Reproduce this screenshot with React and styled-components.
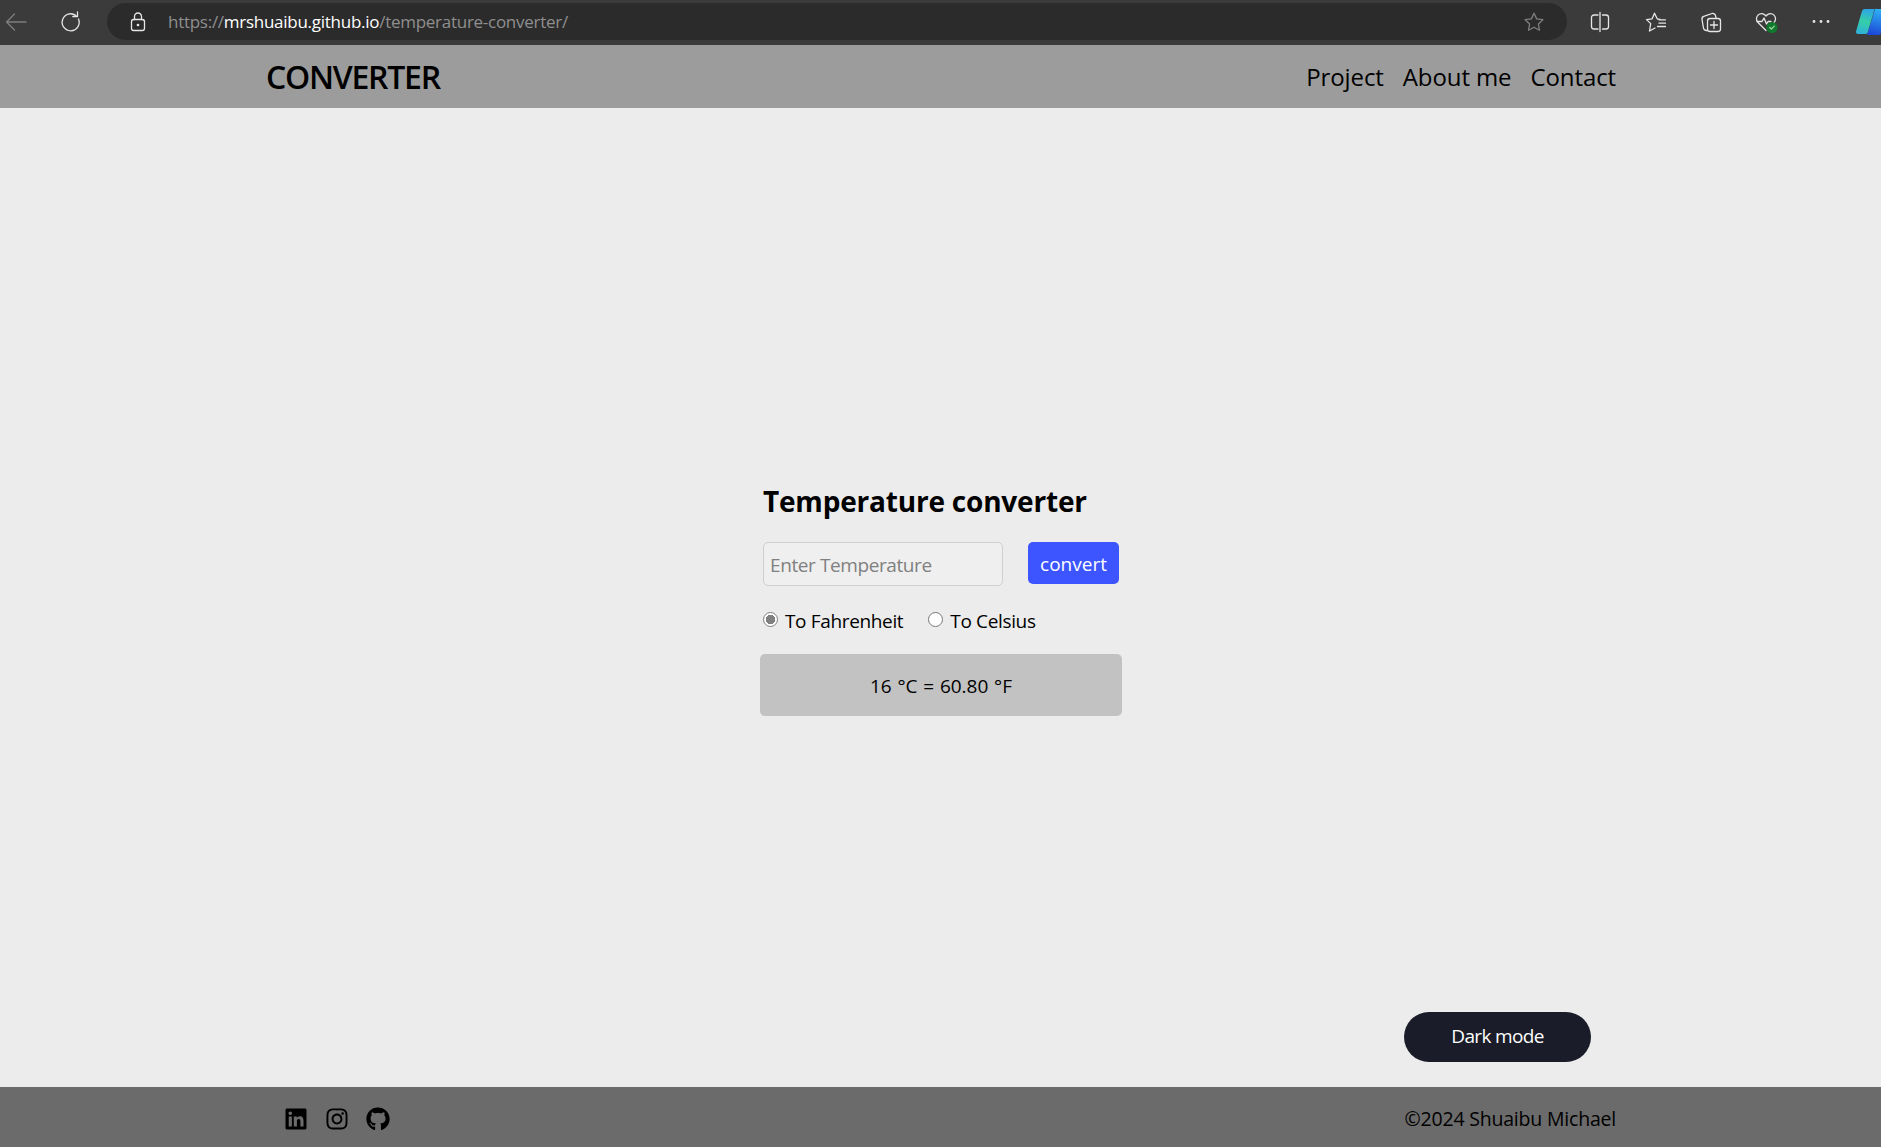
import React from "react";
import styled, { createGlobalStyle } from "styled-components";
import { FaLinkedin, FaInstagram, FaGithub } from "react-icons/fa";

const Global = createGlobalStyle`
  html, body { margin: 0; padding: 0; height: 100%; overflow: hidden; }
  body { font-family: "Open Sans", "Noto Sans", "Liberation Sans", sans-serif; background: #ececec; color: #000; }
  * { box-sizing: border-box; }
`;
const Page = styled.div`
  width: 1881px; height: 1147px; display: flex; flex-direction: column; overflow: hidden;
`;
const BrowserBar = styled.div`
  height: 45px; flex: none; background: #3b3b3b; display: flex; align-items: center; position: relative;
  padding: 0 0 2px 4px;
`;
const NavIcon = styled.span`
  display: flex; width: 24px; height: 24px; flex: none; align-items: center; justify-content: center;
  margin-left: ${p => p.$ml || 0}px; margin-right: ${p => p.$mr || 0}px; color: ${p => p.$dim ? "#7e7e7e" : "#e6e6e6"};
`;
const UrlPill = styled.div`
  width: 1460px; height: 37px; margin-left: 24px; border-radius: 19px; background: #2b2b2b; flex: none;
  display: flex; align-items: center; padding-left: 19px;
`;
const UrlText = styled.div`
  margin-left: 18px; font-size: 17px; letter-spacing: -0.27px; color: #8f8f8f; white-space: nowrap; flex: 1;
  b { font-weight: 400; color: #fff; }
`;
const Nav = styled.header`
  height: 63px; flex: none; background: #9c9c9c; display: flex; align-items: center; justify-content: space-between;
  padding: 1px 265px 0 266px;
`;
const Brand = styled.div`
  font-size: 32px; font-weight: 600; letter-spacing: -1.25px; line-height: 1;
`;
const NavLinks = styled.nav`
  display: flex; gap: 19px;
`;
const NavLink = styled.a`
  font-size: 24px; letter-spacing: -0.1px; color: #000; line-height: 1;
`;
const Main = styled.main`
  flex: 1; display: flex; flex-direction: column; padding-top: 376px;
`;
const Converter = styled.section`
  width: 362px; margin-left: 760px; display: flex; flex-direction: column;
`;
const Title = styled.h1`
  margin: 0 0 0 3px; font-size: 28px; font-weight: 700; line-height: 34px; letter-spacing: -0.2px; white-space: nowrap;
`;
const InputRow = styled.div`
  display: flex; margin: 24px 0 0 3px; align-items: flex-start;
`;
const TempInput = styled.input`
  width: 240px; height: 44px; padding: 1px 6px 0; border: 1px solid #cfcfcf; border-radius: 5px; background: #efefef;
  font: 400 19px "Open Sans", sans-serif; letter-spacing: -0.4px; outline: none;
  &::placeholder { color: #808080; opacity: 1; }
`;
const ConvertButton = styled.button`
  width: 91px; height: 42px; margin-left: 25px; border: 0; border-radius: 5px; background: #3d55ff; color: #fff;
  font: 400 19px "Open Sans", sans-serif; padding: 2px 0 0;
`;
const RadioRow = styled.div`
  display: flex; margin: 20px 0 0 3px; height: 28px; align-items: center;
`;
const RadioLabel = styled.label`
  display: flex; align-items: center; font-size: 19px; letter-spacing: -0.35px; margin-right: 25px; white-space: nowrap;
  padding-top: 2px;
`;
const RadioDot = styled.span`
  width: 15px; height: 15px; border-radius: 50%; flex: none; margin: -4px 7px 0 0;
  background: ${p => p.$on ? "radial-gradient(circle, #808080 0 4.5px, #fff 5px)" : "#fff"};
  border: 1px solid ${p => p.$on ? "#808080" : "#767676"};
`;
const Result = styled.div`
  margin-top: 20px; height: 62px; border-radius: 5px; background: #c2c2c2; display: flex; align-items: center; justify-content: center;
  font-size: 19px; word-spacing: 0.8px; padding-top: 2px;
`;
const ModeRow = styled.div`
  margin-top: auto; padding: 0 290px 25px 0; display: flex; justify-content: flex-end;
`;
const ModeButton = styled.button`
  width: 187px; height: 50px; border: 0; border-radius: 25px; background: #1a1c29; color: #fff;
  font: 400 19px "Open Sans", sans-serif; letter-spacing: -0.65px; padding: 0 0 2px;
`;
const Footer = styled.footer`
  height: 60px; flex: none; background: #6b6b6b; display: flex; align-items: center; justify-content: space-between;
  padding: 3px 265px 0 284px;
`;
const Socials = styled.div`
  display: flex; align-items: center; gap: 17px; font-size: 24px; color: #000; svg { display: block; }
`;
const Copy = styled.div`
  font-size: 19.5px; letter-spacing: -0.2px; color: #000;
`;
const CopilotMark = styled.svg`
  flex: none; width: 36px; height: 28px; margin-left: 23px;
`;

const S = { fill: "none", stroke: "currentColor", strokeWidth: 1.3, strokeLinecap: "round", strokeLinejoin: "round" };
const Ic = ({ children }) => <svg width="24" height="24" viewBox="0 0 24 24" {...S}>{children}</svg>;

export default function App() {
  return (
    <Page>
      <Global />
      <BrowserBar>
        <NavIcon $dim><Ic><path d="M22 12H2.500M10.500 4l-8 8 8 8" /></Ic></NavIcon>
        <NavIcon $ml={31}><Ic><path d="M19.500 9a8.500 8.500 0 1 1-2.600-3.400M18.500 1.800v4.700h-4.700" /></Ic></NavIcon>
        <UrlPill>
          <NavIcon><Ic><rect x="5.500" y="9.500" width="13" height="11" rx="2.200" /><path d="M8.500 9.500V6.500a3.500 3.500 0 0 1 7 0v3" /><circle cx="12" cy="15" r=".7" fill="currentColor" /></Ic></NavIcon>
          <UrlText>https://<b>mrshuaibu.github.io</b>/temperature-converter/</UrlText>
          <NavIcon $dim $mr={21}><Ic><path d="M12 3.200l2.700 5.700 6.200.8-4.500 4.300 1.100 6.200L12 17.200l-5.500 3 1.100-6.200L3.100 9.700l6.200-.8z" /></Ic></NavIcon>
        </UrlPill>
        <NavIcon $ml={21}><Ic><path d="M10 5H6a2.500 2.500 0 0 0-2.500 2.500v9A2.500 2.500 0 0 0 6 19h4M14.500 5H18a2.500 2.500 0 0 1 2.500 2.500v9A2.500 2.500 0 0 1 18 19h-3.500M12 2.500v19" /></Ic></NavIcon>
        <NavIcon $ml={32}><Ic><path d="M16 9.500l-2.800-.7-2.700-5.600-2.400 5.600-5.600.8 4.200 4-1.200 7.400 5.500-3M15 9.800h6.500M15 13.200h6.500M13.500 16.500h8" /></Ic></NavIcon>
        <NavIcon $ml={31}><Ic><path d="M8.500 20.500H7.500a3 3 0 0 1-3-2.300L3 9.500a3 3 0 0 1 2.400-3.400L13 3.500a3 3 0 0 1 3.600 2.300l.4 2" /><rect x="8.500" y="8.500" width="13" height="13" rx="2.500" /><path d="M15 11.500v7M11.500 15h7" /></Ic></NavIcon>
        <NavIcon $ml={31}>
          <Ic><path d="M12 20.500L4 12.500a5.200 5.200 0 0 1 0-7.400 5 5 0 0 1 7.300.2l.7.800.7-.8a5 5 0 0 1 7.300-.2 5.200 5.200 0 0 1 0 7.400" /><path d="M3 11.500h5l2-3.500 2.500 6 1.500-2.500h3" /><circle cx="18" cy="17.500" r="5.500" fill="#0f7a2b" stroke="none" /><path d="M15.800 17.500l1.600 1.600 2.800-3" stroke="#a5d6a7" /></Ic>
        </NavIcon>
        <NavIcon $ml={31}><svg width="24" height="24" viewBox="0 0 24 24" fill="currentColor"><circle cx="5" cy="11.500" r="1.400" /><circle cx="12" cy="11.500" r="1.400" /><circle cx="19" cy="11.500" r="1.400" /></svg></NavIcon>
        <CopilotMark viewBox="0 0 36 28">
          <defs>
            <linearGradient id="copilotLeft" x1="0.500" y1="0" x2="0.300" y2="1">
              <stop offset="0" stopColor="#2ea3e8" />
              <stop offset="0.500" stopColor="#35cfa8" />
              <stop offset="1" stopColor="#2fb0d8" />
            </linearGradient>
            <linearGradient id="copilotRight" x1="0.600" y1="0" x2="0.400" y2="1">
              <stop offset="0" stopColor="#2fb2f5" />
              <stop offset="1" stopColor="#1c48d8" />
            </linearGradient>
          </defs>
          <path d="M19 1h9a3 3 0 0 1 3 3l-6 20a3 3 0 0 1-3 3H11z" fill="url(#copilotRight)" />
          <path d="M9 1h12a2 2 0 0 0-3 2l-6 20a3 3 0 0 1-3 3H2a2 2 0 0 1-2-2.500L6 3a3 3 0 0 1 3-2z" fill="url(#copilotLeft)" />
        </CopilotMark>
      </BrowserBar>
      <Nav>
        <Brand>CONVERTER</Brand>
        <NavLinks>
          <NavLink>Project</NavLink>
          <NavLink>About me</NavLink>
          <NavLink>Contact</NavLink>
        </NavLinks>
      </Nav>
      <Main>
        <Converter>
          <Title>Temperature converter</Title>
          <InputRow>
            <TempInput placeholder="Enter Temperature" />
            <ConvertButton>convert</ConvertButton>
          </InputRow>
          <RadioRow>
            <RadioLabel><RadioDot $on />To Fahrenheit</RadioLabel>
            <RadioLabel><RadioDot />To Celsius</RadioLabel>
          </RadioRow>
          <Result>16 °C = 60.80 °F</Result>
        </Converter>
        <ModeRow><ModeButton>Dark mode</ModeButton></ModeRow>
      </Main>
      <Footer>
        <Socials><FaLinkedin /><FaInstagram /><FaGithub /></Socials>
        <Copy>©2024 Shuaibu Michael</Copy>
      </Footer>
    </Page>
  );
}
